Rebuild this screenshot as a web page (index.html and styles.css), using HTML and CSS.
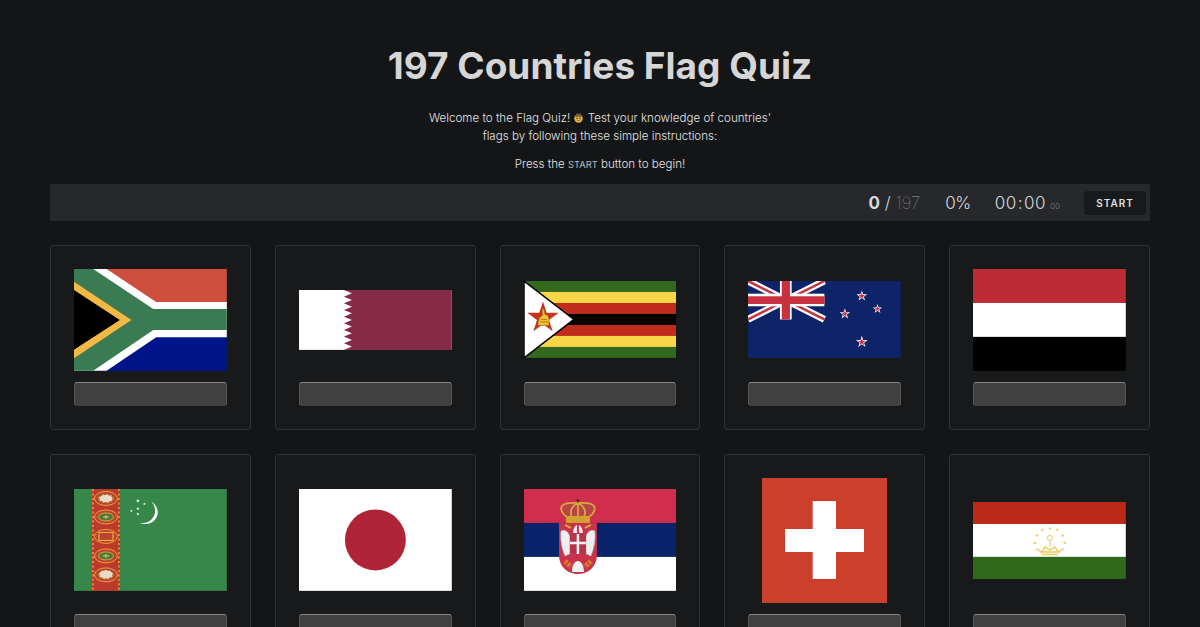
FILE: index.html
```html
<!DOCTYPE html>
<html>

<head>
    <title>197 Countries Flag Quiz</title>
    <link rel="stylesheet" href="styles.css">
</head>

<body>
    <svg class="defs" width="0" height="0" aria-hidden="true">
        <defs>
            <polygon id="star" points="0,-1 .2245,-.309 .951,-.309 .363,.118 .588,.809 0,.382 -.588,.809 -.363,.118 -.951,-.309 -.2245,-.309" />
            <g id="gul">
                <ellipse rx="11.500" ry="7" fill="#b8452c" stroke="#eda13c" stroke-width="1" />
                <ellipse rx="7.500" ry="4" fill="#4b7a3a" stroke="#f2b04a" stroke-width=".8" />
                <path d="M-3 0h6M0 -2v4" stroke="#f2c46a" stroke-width="1" />
            </g>
        </defs>
    </svg>

    <div class="page">
        <header class="intro">
            <h1>197 Countries Flag Quiz</h1>
            <p>Welcome to the Flag Quiz!
                <svg class="emoji" viewBox="0 0 12 12"><circle cx="6" cy="7" r="4.600" fill="#e9b93e" /><path d="M1 4.600c1.400.8 8.600.8 10 0-.8-.4-1.600-.5-2-.7L8 1.400C7 1 6.500 1.800 6 1.800S5 1 4 1.400L3 3.900c-.4.200-1.200.3-2 .7z" fill="#6d5a3a" /><circle cx="4.400" cy="6.800" r=".8" fill="#2b2415" /><circle cx="7.600" cy="6.800" r=".8" fill="#2b2415" /><path d="M4.200 8.700c1 .8 2.600.8 3.600 0" stroke="#2b2415" stroke-width=".6" fill="none" /></svg>
                Test your knowledge of countries' flags by following these simple instructions:</p>
            <p class="press">Press the <span class="small-caps">START</span> button to begin!</p>
        </header>

        <div class="stats-bar">
            <div class="score"><b>0</b> / <span class="total">197</span></div>
            <div class="percent">0%</div>
            <div class="timer">00<span class="colon">:</span>00<small>00</small></div>
            <button class="start-btn">START</button>
        </div>

        <div class="flag-grid">
            <!-- south africa -->
            <div class="card">
                <div class="flag-box">
                    <svg class="flag" viewBox="0 0 900 600">
                        <rect width="900" height="300" fill="#cf4f3e" />
                        <rect y="300" width="900" height="300" fill="#00148a" />
                        <polygon points="0,0 192,0 484,195 900,195 900,402 484,402 192,600 0,600" fill="#fff" />
                        <polygon points="0,0 113,0 467,236 900,236 900,360 467,360 113,600 0,600" fill="#3a7b54" />
                        <polygon points="0,75 338,300 0,525" fill="#f3b944" />
                        <polygon points="0,124 270,300 0,476" fill="#000" />
                    </svg>
                </div>
                <input class="answer" type="text">
            </div>

            <!-- qatar -->
            <div class="card">
                <div class="flag-box">
                    <svg class="flag" viewBox="0 0 153 60">
                        <rect width="153" height="60" fill="#fff" />
                        <polygon points="45,0 53,3.330 45,6.670 53,10 45,13.330 53,16.670 45,20 53,23.330 45,26.670 53,30 45,33.330 53,36.670 45,40 53,43.330 45,46.670 53,50 45,53.330 53,56.670 45,60 153,60 153,0" fill="#852a47" />
                    </svg>
                </div>
                <input class="answer" type="text">
            </div>

            <!-- zimbabwe -->
            <div class="card">
                <div class="flag-box">
                    <svg class="flag" viewBox="0 0 153 77">
                        <rect width="153" height="77" fill="#33691e" />
                        <rect y="11" width="153" height="55" fill="#fbd548" />
                        <rect y="22" width="153" height="33" fill="#bf2c1c" />
                        <rect y="33" width="153" height="11" fill="#000" />
                        <polygon points="0,0 50,38.500 0,77" fill="#fff" stroke="#000" stroke-width="1.500" />
                        <use href="#star" transform="translate(19 37) scale(16.500)" fill="#c8321f" />
                        <path d="M14 44.500h11v-6c0-3-2-5-4-5l-1-5-2-1 .5 7c-2.500 1-4.500 4-4.500 10z" fill="#f2c335" stroke="#8a6414" stroke-width=".6" />
                        <path d="M16 41h8M17 38.500h6" stroke="#8a6414" stroke-width=".7" />
                    </svg>
                </div>
                <input class="answer" type="text">
            </div>

            <!-- new zealand -->
            <div class="card">
                <div class="flag-box">
                    <svg class="flag" viewBox="0 0 153 77">
                        <rect width="153" height="77" fill="#0f2468" />
                        <path d="M0 0L76.500 38.500M76.500 0L0 38.500" stroke="#fff" stroke-width="7" />
                        <path d="M0 0L76.500 38.500M76.500 0L0 38.500" stroke="#c8313e" stroke-width="2.500" />
                        <rect x="32" width="11.700" height="38.500" fill="#fff" />
                        <rect y="12.700" width="76.500" height="12.600" fill="#fff" />
                        <rect x="33.800" width="8.200" height="38.500" fill="#c8313e" />
                        <rect y="15.300" width="76.500" height="7.700" fill="#c8313e" />
                        <use href="#star" transform="translate(114 15) scale(5.600)" fill="#fff" />
                        <use href="#star" transform="translate(114 15) scale(3.500)" fill="#c8313e" />
                        <use href="#star" transform="translate(129.700 28) scale(5)" fill="#fff" />
                        <use href="#star" transform="translate(129.700 28) scale(3)" fill="#c8313e" />
                        <use href="#star" transform="translate(97 33) scale(5.600)" fill="#fff" />
                        <use href="#star" transform="translate(97 33) scale(3.500)" fill="#c8313e" />
                        <use href="#star" transform="translate(114 61) scale(6.200)" fill="#fff" />
                        <use href="#star" transform="translate(114 61) scale(4)" fill="#c8313e" />
                    </svg>
                </div>
                <input class="answer" type="text">
            </div>

            <!-- yemen -->
            <div class="card">
                <div class="flag-box">
                    <svg class="flag" viewBox="0 0 153 102">
                        <rect width="153" height="34" fill="#bd2c34" />
                        <rect y="34" width="153" height="34" fill="#fff" />
                        <rect y="68" width="153" height="34" fill="#000" />
                    </svg>
                </div>
                <input class="answer" type="text">
            </div>

            <!-- turkmenistan -->
            <div class="card">
                <div class="flag-box">
                    <svg class="flag" viewBox="0 0 153 102">
                        <rect width="153" height="102" fill="#38874a" />
                        <rect x="18" width="28" height="102" fill="#bb3a2c" />
                        <path d="M19 0V102M45 0V102" stroke="#eda13c" stroke-width="1.500" stroke-dasharray="2 2.500" />
                        <use href="#gul" transform="translate(32 9.500)" />
                        <use href="#gul" transform="translate(32 28)" />
                        <use href="#gul" transform="translate(32 47.500)" />
                        <use href="#gul" transform="translate(32 67)" />
                        <use href="#gul" transform="translate(32 86)" />
                        <ellipse cx="32" cy="9.500" rx="7" ry="4" fill="#e9dcc6" stroke="#a5402c" stroke-dasharray="2 2" />
                        <rect x="25" y="43.500" width="14" height="8" fill="#b8452c" stroke="#f2b04a" />
                        <ellipse cx="32" cy="85.500" rx="7" ry="4.500" fill="#e9dcc6" stroke="#a5402c" stroke-dasharray="2 2" />
                        <path d="M77.500 12.500c6 4 8 11 5 16-3 6-10 8-18 5.500 7 1 12-1 15-6 3-5 2-11-2-15.500z" fill="#fff" />
                        <use href="#star" transform="translate(64 12) scale(2)" fill="#fff" />
                        <use href="#star" transform="translate(70.500 15) scale(1.600)" fill="#fff" />
                        <use href="#star" transform="translate(64 19.500) scale(1.800)" fill="#fff" />
                        <use href="#star" transform="translate(64 25) scale(1.800)" fill="#fff" />
                        <use href="#star" transform="translate(57.500 22) scale(1.500)" fill="#fff" />
                    </svg>
                </div>
                <input class="answer" type="text">
            </div>

            <!-- japan -->
            <div class="card">
                <div class="flag-box">
                    <svg class="flag" viewBox="0 0 153 102">
                        <rect width="153" height="102" fill="#fff" />
                        <circle cx="76.500" cy="51" r="30.500" fill="#b02437" />
                    </svg>
                </div>
                <input class="answer" type="text">
            </div>

            <!-- serbia -->
            <div class="card">
                <div class="flag-box">
                    <svg class="flag" viewBox="0 0 153 102">
                        <rect width="153" height="34" fill="#cf2e4d" />
                        <rect y="34" width="153" height="34" fill="#0a246c" />
                        <rect y="68" width="153" height="34" fill="#fff" />
                        <!-- crown -->
                        <path d="M43 28c-5-3-7-8-5-11 3-4 10-3 16-3s13-1 16 3c2 3 0 8-5 11" fill="#b8434a" stroke="#d9a83c" stroke-width="1.800" />
                        <path d="M48 28c-2-4-2-10 6-14 8 4 8 10 6 14M54 14v14" fill="none" stroke="#d9a83c" stroke-width="1.800" />
                        <path d="M54 10v4M52.500 11.500h3" stroke="#3a2c10" stroke-width="1" />
                        <rect x="42" y="27" width="24" height="7" fill="#d3a032" />
                        <!-- shield and eagle -->
                        <path d="M35 34h38v32c0 12-9 19-19 19s-19-7-19-19z" fill="#c8334b" />
                        <path d="M37 42c4-2 8 1 9 6v17l-5 2c-3-7-5-16-4-25zM71 42c-4-2-8 1-9 6v17l5 2c3-7 5-16 4-25z" fill="#eee" stroke="#aaa" stroke-width=".7" />
                        <path d="M49 44c0-4 2-7 4-8v8zM59 44c0-4-2-7-4-8v8z" fill="#eee" />
                        <path d="M41 36l6 3M67 36l-6 3" stroke="#d9a83c" stroke-width="2" />
                        <rect x="46" y="45" width="16" height="20" fill="#b8344a" />
                        <path d="M54 45v20M46 54h16" stroke="#f4f4f4" stroke-width="2.500" />
                        <path d="M41 72l6 6M67 72l-6 6" stroke="#d97d28" stroke-width="5" stroke-dasharray="3 1" />
                        <path d="M48 83c0-7 3-11 6-11s6 4 6 11z" fill="#f2f2f2" />
                    </svg>
                </div>
                <input class="answer" type="text">
            </div>

            <!-- switzerland -->
            <div class="card">
                <div class="flag-box">
                    <svg class="flag flag-square" viewBox="0 0 125 125">
                        <rect width="125" height="125" fill="#cb3f2b" />
                        <rect x="50.700" y="23" width="23.300" height="78" fill="#fff" />
                        <rect x="23" y="51" width="79" height="23" fill="#fff" />
                    </svg>
                </div>
                <input class="answer" type="text">
            </div>

            <!-- tajikistan -->
            <div class="card">
                <div class="flag-box">
                    <svg class="flag" viewBox="0 0 153 77">
                        <rect width="153" height="22" fill="#bb2a18" />
                        <rect y="22" width="153" height="33" fill="#fff" />
                        <rect y="55" width="153" height="22" fill="#2f6a1c" />
                        <g fill="#eec65a">
                            <use href="#star" transform="translate(77 26.500) scale(2)" />
                            <use href="#star" transform="translate(69.500 28) scale(2)" />
                            <use href="#star" transform="translate(84.500 28) scale(2)" />
                            <use href="#star" transform="translate(64 33.500) scale(2)" />
                            <use href="#star" transform="translate(90 33.500) scale(2)" />
                            <use href="#star" transform="translate(62 41) scale(2)" />
                            <use href="#star" transform="translate(92 41) scale(2)" />
                        </g>
                        <path d="M67 50h20M69 52.500h16" stroke="#eec65a" stroke-width="1.500" />
                        <path d="M63 47c3 1 5 3 6 3l3-5 5 3 5-3 3 5c1 0 3-2 6-3" stroke="#eec65a" stroke-width="1.300" fill="none" />
                        <circle cx="77" cy="36" r="2.500" stroke="#eec65a" stroke-width="1" fill="none" />
                        <path d="M77 38.500v6" stroke="#eec65a" stroke-width="1" />
                    </svg>
                </div>
                <input class="answer" type="text">
            </div>
        </div>
    </div>
</body>

</html>
```

FILE: styles.css
```css
html,
body {
    margin: 0;
    background: #131517;
}

body {
    font-family: Inter, "Liberation Sans", sans-serif;
    color: #d8d8d8;
}

.defs {
    position: absolute;
}

.page {
    height: 100vh;
    box-sizing: border-box;
    padding: 44px 50px 0;
    overflow: hidden;
}

/* HEADER */
.intro {
    text-align: center;
}

.intro h1 {
    margin: 0 0 21px;
    font-size: 37px;
    line-height: 44px;
    font-weight: 700;
    color: #d6d6d6;
}

.intro p {
    width: 350px;
    margin: 0 auto;
    font-size: 11.6px;
    line-height: 18px;
    font-weight: 300;
    color: #e4e4e4;
}

.intro .press {
    margin-top: 10px;
}

.small-caps {
    font-size: 9.5px;
}

.emoji {
    width: 11px;
    height: 11px;
    vertical-align: -1px;
}

/* STATS BAR */
.stats-bar {
    display: flex;
    align-items: center;
    justify-content: flex-end;
    height: 37px;
    margin-top: 10px;
    padding-right: 4px;
    background: #26282b;
    color: #d8d8d8;
    font-size: 17px;
    font-weight: 300;
}

.score b {
    font-weight: 700;
}

.total {
    font-weight: 100;
    color: #a0a0a0;
}

.percent {
    margin-left: 25px;
    letter-spacing: -.5px;
}

.timer {
    margin-left: 24px;
    letter-spacing: .5px;
}

.colon {
    margin: 0 1px;
}

.timer small {
    margin-left: 4px;
    font-size: 8px;
    letter-spacing: 0;
    color: #777;
}

.start-btn {
    width: 62px;
    height: 24px;
    margin-left: 24px;
    padding: 0;
    border: none;
    border-radius: 4px;
    background: #18191b;
    color: #e0e0e0;
    font-family: inherit;
    font-size: 10px;
    font-weight: 600;
    letter-spacing: 1px;
}

/* FLAG CARDS */
.flag-grid {
    display: grid;
    grid-template-columns: repeat(5, 1fr);
    gap: 24px;
    margin-top: 24px;
}

.card {
    display: flex;
    flex-direction: column;
    padding: 23px;
    border: 1px solid #2e3033;
    border-radius: 3px;
    background: #17191b;
}

.flag-box {
    flex: 1;
    display: flex;
    align-items: center;
    justify-content: center;
}

.flag {
    display: block;
    width: 100%;
    height: auto;
}

.flag-square {
    width: 125px;
}

.answer {
    box-sizing: border-box;
    width: 100%;
    height: 24px;
    margin-top: 11px;
    padding: 0 8px;
    border: 1px solid #575757;
    border-top-color: #858585;
    border-bottom-color: #404040;
    border-radius: 3px;
    background: #404040;
}
```
